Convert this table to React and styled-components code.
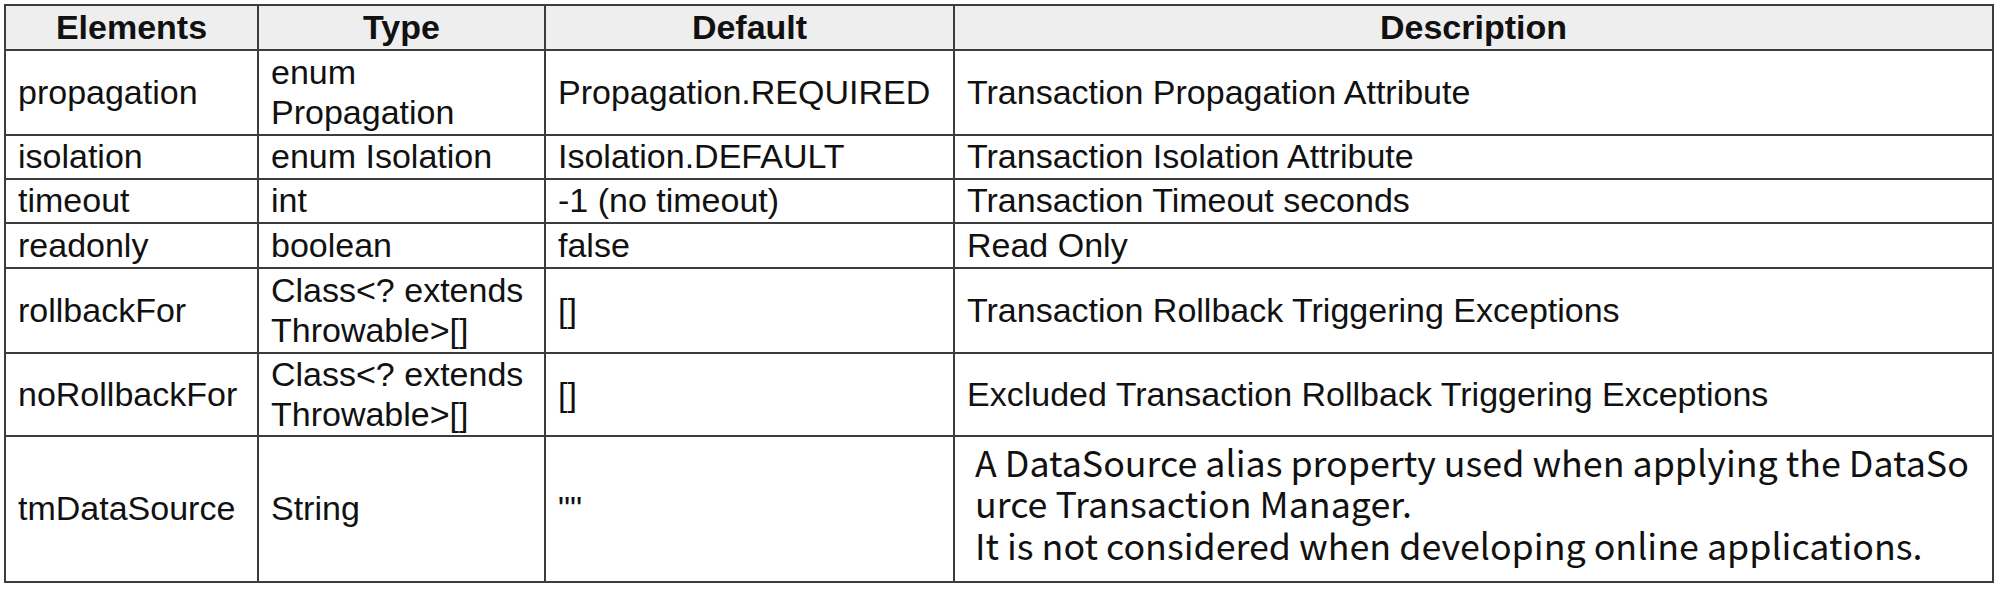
import React from 'react';
import styled, { createGlobalStyle, css } from 'styled-components';

const Global = createGlobalStyle`
  html, body { margin: 0; padding: 0; background: #ffffff; }
  body { font-family: "Liberation Sans", Arial, sans-serif; }
`;

const Page = styled.div`
  padding: 4px 0 0 4px;
`;

const Table = styled.table`
  border-collapse: collapse;
  table-layout: fixed;
  width: 1988px;
  font-family: "Liberation Sans", Arial, sans-serif;
  font-size: 34px;
  color: #111;
  border: 2px solid #3c3c3c;
`;

const Col = styled.col`
  width: ${p => p.$w}px;
`;

const Row = styled.tr`
  height: ${p => p.$h}px;
`;

const Head = styled.th`
  background: #eeeeee;
  font-weight: bold;
  text-align: center;
  vertical-align: middle;
  border: 2px solid #3c3c3c;
  padding: 0 12px;
  line-height: 1.15;
`;

const Cell = styled.td`
  border: 2px solid #3c3c3c;
  padding: 0 12px;
  vertical-align: middle;
  text-align: left;
  line-height: 1.15;
  ${p => p.$note && css`
    font-family: "Noto Sans CJK JP", sans-serif;
    font-size: 35.8px;
    line-height: 41.5px;
    padding: 0 4px 12px 20px;
    white-space: nowrap;
  `}
`;

const rows = [
  { h: 85, c: ['propagation', 'enum Propagation', 'Propagation.REQUIRED', 'Transaction Propagation Attribute'] },
  { h: 44, c: ['isolation', 'enum Isolation', 'Isolation.DEFAULT', 'Transaction Isolation Attribute'] },
  { h: 44, c: ['timeout', 'int', '-1 (no timeout)', 'Transaction Timeout seconds'] },
  { h: 45, c: ['readonly', 'boolean', 'false', 'Read Only'] },
  { h: 85, c: ['rollbackFor', 'Class<? extends Throwable>[]', '[]', 'Transaction Rollback Triggering Exceptions'] },
  { h: 83, c: ['noRollbackFor', 'Class<? extends Throwable>[]', '[]', 'Excluded Transaction Rollback Triggering Exceptions'] },
];

export default function App() {
  return (
    <Page>
      <Global />
      <Table>
        <colgroup>
          <Col $w={253} />
          <Col $w={287} />
          <Col $w={409} />
          <Col $w={1039} />
        </colgroup>
        <thead>
          <Row $h={45}>
            <Head>Elements</Head>
            <Head>Type</Head>
            <Head>Default</Head>
            <Head>Description</Head>
          </Row>
        </thead>
        <tbody>
          {rows.map(r => (
            <Row key={r.c[0]} $h={r.h}>
              {r.c.map((t, i) => <Cell key={i}>{t}</Cell>)}
            </Row>
          ))}
          <Row $h={146}>
            <Cell>tmDataSource</Cell>
            <Cell>String</Cell>
            <Cell>""</Cell>
            <Cell $note>
              A DataSource alias property used when applying the DataSo<br />
              urce Transaction Manager.<br />
              It is not considered when developing online applications.
            </Cell>
          </Row>
        </tbody>
      </Table>
    </Page>
  );
}
